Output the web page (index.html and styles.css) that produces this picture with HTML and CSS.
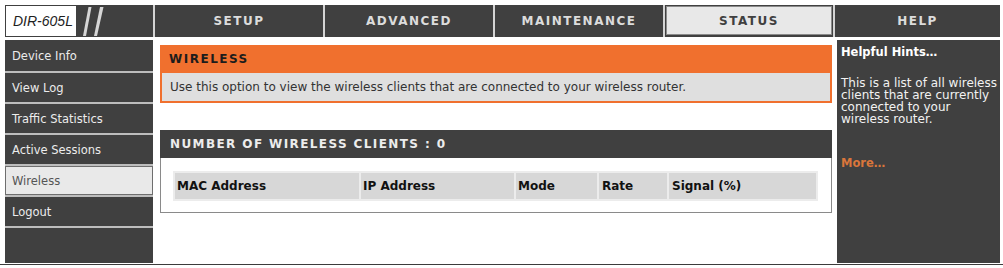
FILE: index.html
```html
<!DOCTYPE html>
<html>
<head>
<meta charset="utf-8">
<link rel="stylesheet" href="styles.css">
</head>
<body>
<div class="frame">
  <div class="topbar">
    <div class="logo">
      <span class="model">DIR-605L</span>
      <svg class="slashes" width="77" height="32" viewBox="0 0 77 32">
        <polygon points="12.5,2 15.5,2 10,31 7,31" fill="#d6d6d6"/>
        <polygon points="24,2 27.5,2 21,31 18,31" fill="#d6d6d6"/>
      </svg>
    </div>
    <div class="tab">SETUP</div>
    <div class="tab">ADVANCED</div>
    <div class="tab">MAINTENANCE</div>
    <div class="tab tab-active">STATUS</div>
    <div class="tab tab-help">HELP</div>
  </div>
  <div class="body">
    <nav class="side">
      <div class="side-item side-first">Device Info</div>
      <div class="side-item">View Log</div>
      <div class="side-item">Traffic Statistics</div>
      <div class="side-item">Active Sessions</div>
      <div class="side-item side-active">Wireless</div>
      <div class="side-item">Logout</div>
      <div class="side-fill"></div>
    </nav>
    <main class="content">
      <section class="box-orange">
        <div class="box-orange-head">WIRELESS</div>
        <div class="box-orange-body">Use this option to view the wireless clients that are connected to your wireless router.</div>
      </section>
      <section class="box-dark">
        <div class="box-dark-head">NUMBER OF WIRELESS CLIENTS : 0</div>
        <div class="box-dark-body">
          <div class="grid-row">
            <div class="cell">MAC Address</div>
            <div class="cell">IP Address</div>
            <div class="cell">Mode</div>
            <div class="cell cell-rate">Rate</div>
            <div class="cell cell-rate">Signal (%)</div>
          </div>
        </div>
      </section>
    </main>
    <aside class="hints">
      <div class="hints-title">Helpful Hints…</div>
      <p class="hints-text">This is a list of all wireless<br>clients that are currently<br>connected to your<br>wireless router.</p>
      <div class="hints-more">More…</div>
    </aside>
  </div>
</div>
<div class="rule"></div>
</body>
</html>
```
FILE: styles.css
```css
html, body {
  margin: 0;
  padding: 0;
  background: #ffffff;
}
body {
  font-family: "DejaVu Sans", "Open Sans", sans-serif;
  font-size: 12px;
  color: #222;
  width: 1003px;
  height: 268px;
  overflow: hidden;
}
.frame {
  padding: 5px 3px 0 5px;
}
.topbar {
  display: flex;
  gap: 2px;
  height: 32px;
  background: #d4d4d4;
}
.logo {
  width: 148px;
  flex: none;
  background: #404040;
  display: flex;
  align-items: flex-start;
}
.model {
  margin: 1px 0 0 1px;
  width: 70px;
  height: 30px;
  background: #ffffff;
  font-family: "Liberation Sans", Arial, sans-serif;
  font-style: italic;
  font-size: 14px;
  color: #1e1e1e;
  display: flex;
  align-items: center;
  padding-left: 7px;
  box-sizing: border-box;
}
.slashes {
  display: block;
  flex: none;
}
.tab {
  width: 168px;
  flex: none;
  background: #404040;
  color: #dcdcdc;
  font-weight: 700;
  font-size: 12px;
  letter-spacing: 1.5px;
  display: flex;
  align-items: center;
  justify-content: center;
  box-sizing: border-box;
}
.tab-active {
  background: #e8e8e8;
  color: #404040;
  border: 1px solid #404040;
  border-bottom-width: 2px;
  box-shadow: inset 0 0 0 1px #8a8a8a;
}
.tab-help {
  width: auto;
  flex: 1;
}
.body {
  display: flex;
  gap: 2px;
  margin-top: 3px;
  height: 223px;
}
.side {
  width: 148px;
  flex: none;
  display: flex;
  flex-direction: column;
  gap: 2px;
  background: #bdbdbd;
}
.side-item {
  height: 29px;
  flex: none;
  background: #404040;
  color: #ececec;
  font-size: 11.5px;
  display: flex;
  align-items: center;
  padding-left: 7px;
  box-sizing: border-box;
}
.side-first {
  height: 31px;
}
.side-active {
  background: #e9e9e9;
  color: #555;
  border: 1px solid #6e6e6e;
  padding-left: 6px;
}
.side-fill {
  flex: 1;
  background: #404040;
}
.content {
  width: 680px;
  flex: none;
  background: #fff;
  padding: 5px 3px 0 5px;
  box-sizing: border-box;
}
.box-orange-head {
  height: 28px;
  background: #f0702e;
  color: #1c1c1c;
  font-weight: 700;
  font-size: 12px;
  letter-spacing: 1.5px;
  display: flex;
  align-items: center;
  padding-left: 9px;
}
.box-orange-body {
  height: 30px;
  box-sizing: border-box;
  background: #dfdfdf;
  border: 2px solid #f0702e;
  border-top: none;
  color: #333;
  font-size: 12px;
  padding-left: 8px;
  display: flex;
  align-items: center;
  white-space: nowrap;
}
.box-dark {
  margin-top: 27px;
}
.box-dark-head {
  height: 28px;
  background: #404040;
  color: #ececec;
  font-weight: 700;
  font-size: 12px;
  letter-spacing: 1.4px;
  display: flex;
  align-items: center;
  padding-left: 10px;
  white-space: pre;
}
.box-dark-body {
  border: 1px solid #8a8a8a;
  border-top: none;
  padding: 13px 13px 11px 12px;
}
.grid-row {
  display: grid;
  grid-template-columns: 184px 153px 81px 68px 1fr;
  gap: 2px;
  padding: 2px;
  background: #ececec;
  height: 30px;
  box-sizing: border-box;
}
.cell {
  background: #d7d7d7;
  font-weight: 700;
  font-size: 12px;
  color: #111;
  display: flex;
  align-items: center;
  padding-left: 2px;
  white-space: nowrap;
}
.cell-rate {
  padding-left: 3px;
}
.hints {
  flex: 1;
  background: #404040;
  color: #f2f2f2;
  padding: 4px 0 0 4px;
  white-space: nowrap;
}
.hints-title {
  font-weight: 700;
  font-size: 11.5px;
  line-height: 16px;
  color: #ffffff;
}
.hints-text {
  margin: 17px 0 0 0;
  font-size: 12px;
  line-height: 12px;
}
.hints-more {
  margin-top: 30px;
  font-weight: 700;
  font-size: 11.5px;
  line-height: 16px;
  color: #d9763b;
}
.rule {
  margin-top: 1px;
  height: 1px;
  background: #3c3c3c;
}
```
